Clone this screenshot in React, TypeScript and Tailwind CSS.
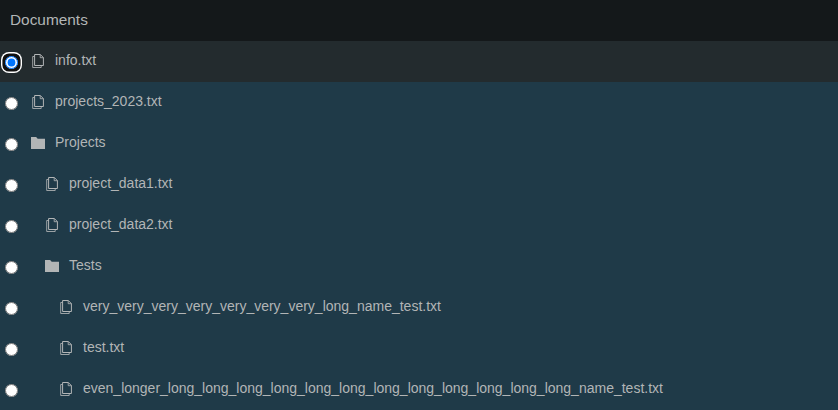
const rows = [
  { name: "info.txt", depth: 0, folder: false },
  { name: "projects_2023.txt", depth: 0, folder: false },
  { name: "Projects", depth: 0, folder: true },
  { name: "project_data1.txt", depth: 1, folder: false },
  { name: "project_data2.txt", depth: 1, folder: false },
  { name: "Tests", depth: 1, folder: true },
  { name: "very_very_very_very_very_very_very_long_name_test.txt", depth: 2, folder: false },
  { name: "test.txt", depth: 2, folder: false },
  { name: "even_longer_long_long_long_long_long_long_long_long_long_long_long_long_name_test.txt", depth: 2, folder: false },
];

const indent = ["pl-[13px]", "pl-[27px]", "pl-[41px]"];

function FileIcon() {
  return (
    <svg width="14" height="14" viewBox="0 0 14 14" fill="none" stroke="currentColor" className="mt-[2px] shrink-0">
      <path d="M3.6 .5h5.7l3.1 3.1v7.9H3.6z" />
      <path d="M9.2 .5v3.2h3.2M3.6 2.5H1.7v11h8.5v-1.9" strokeWidth="0.85" />
    </svg>
  );
}

function FolderIcon() {
  return (
    <svg width="14" height="14" viewBox="0 0 14 14" fill="currentColor" className="mt-[2px] shrink-0">
      <path d="M0 1h5.1l1.6 1.7H14V13H0z" />
    </svg>
  );
}

export default function App() {
  return (
    <div className="h-[410px] overflow-hidden bg-[#1f3a48] font-['Liberation_Sans',Arial,sans-serif] text-[#b2b5b6]">
      <header className="flex h-[41px] items-center bg-[#14181a] px-[10px] pb-[2px] text-[15.4px]">Documents</header>
      {rows.map((r, i) => (
        <div key={r.name} className={`flex h-[41px] items-center ${i === 0 ? "bg-[#232b2e]" : ""}`}>
          <span className="mt-px ml-[5px] flex size-[13px] shrink-0 rounded-[4px] focus-within:bg-[#101010] focus-within:shadow-[0_0_0_2.6px_#101010,0_0_0_4px_#ffffff]">
            <input type="radio" name="doc" defaultChecked={i === 0} autoFocus={i === 0} className="size-[13px] outline-none" />
          </span>
          <div className={`mb-[3px] flex items-center gap-[10px] text-sm ${indent[r.depth]}`}>
            {r.folder ? <FolderIcon /> : <FileIcon />}
            <span>{r.name}</span>
          </div>
        </div>
      ))}
    </div>
  );
}
